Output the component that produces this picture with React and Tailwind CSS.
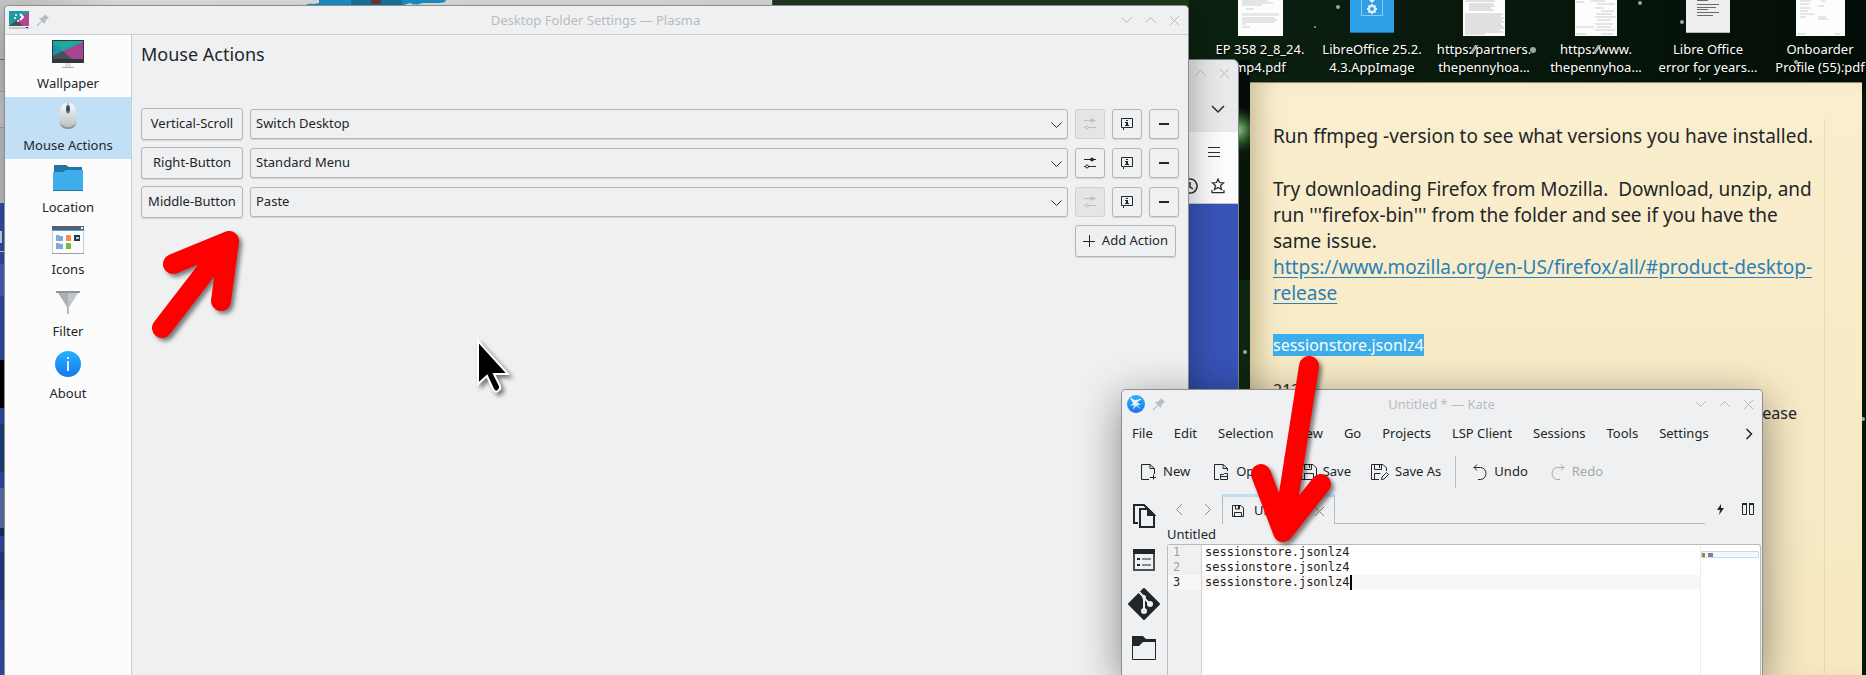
import { useState } from 'react'

const desktopIcons = [
  { name: ['EP 358 2_8_24.', 'mp4.pdf'], kind: 'letter', width: 45 },
  { name: ['LibreOffice 25.2.', '4.3.AppImage'], kind: 'appimage', width: 44 },
  { name: ['https:⁄⁄partners.', 'thepennyhoa...'], kind: 'dense', width: 42 },
  { name: ['https:⁄⁄www.', 'thepennyhoa...'], kind: 'sparse', width: 42 },
  { name: ['Libre Office', 'error for years...'], kind: 'text', width: 44 },
  { name: ['Onboarder', 'Profile (55).pdf'], kind: 'form', width: 49 },
]

const pages = [
  { name: 'Wallpaper', Icon: WallpaperIcon },
  { name: 'Mouse Actions', Icon: MouseIcon },
  { name: 'Location', Icon: LocationIcon },
  { name: 'Icons', Icon: IconsIcon },
  { name: 'Filter', Icon: FilterIcon },
  { name: 'About', Icon: AboutIcon },
]

const mouseActions = [
  { trigger: 'Vertical-Scroll', action: 'Switch Desktop', configurable: false },
  { trigger: 'Right-Button', action: 'Standard Menu', configurable: true },
  { trigger: 'Middle-Button', action: 'Paste', configurable: false },
]

const actionNames = ['Switch Desktop', 'Standard Menu', 'Paste', 'Application Launcher']

const menus = ['File', 'Edit', 'Selection', 'View', 'Go', 'Projects', 'LSP Client', 'Sessions', 'Tools', 'Settings']

const lines = ['sessionstore.jsonlz4', 'sessionstore.jsonlz4', 'sessionstore.jsonlz4']

/* ---------- icons ---------- */

function Stroke({ d, size = 16, width = 1, className = '' }) {
  return (
    <svg width={size} height={size} viewBox={`0 0 ${size} ${size}`} fill="none" stroke="currentColor" strokeWidth={width} className={`shrink-0 ${className}`} aria-hidden="true">
      <path d={d} />
    </svg>
  )
}

function WallpaperIcon() {
  return (
    <svg width="32" height="32" viewBox="0 0 32 32" aria-hidden="true">
      <path d="M0 2h32v23H0z" fill="#31363b" />
      <path d="M1 3h30v18H1z" fill="#1f8fa8" />
      <path d="M1 3h30v1L11 13 1 6z" fill="#1cb09a" opacity=".8" />
      <path d="M31 4v17H20l-9-8z" fill="#a8458f" />
      <path d="m11 13 9 8h-8z" fill="#cf4a64" />
      <path d="m1 18 10-5 9 8H1z" fill="#475057" />
      <path d="M13 25h6v4h-6z" fill="#dfe3e5" />
      <path d="M10 29h12v1H10z" fill="#aab0b5" />
    </svg>
  )
}

function MouseIcon() {
  return (
    <svg width="32" height="32" viewBox="0 0 32 32" aria-hidden="true">
      <defs>
        <linearGradient id="mouse-body" x1="0" y1="0" x2="0" y2="1">
          <stop offset="0" stopColor="#f7f7f7" />
          <stop offset="1" stopColor="#b9bcbf" />
        </linearGradient>
      </defs>
      <path d="M8 12q0-9 8-9t8 9v9q0 8-8 8t-8-8z" fill="url(#mouse-body)" />
      <path d="M8 20v1q0 8 8 8t8-8v-1q0 7-8 7t-8-7z" fill="#8f9499" />
      <path d="M15.500 3h1v11h-1z" fill="#8f9499" />
      <rect x="14" y="5" width="4" height="8" rx="2" fill="#4b6f8c" />
      <rect x="15" y="7" width="2" height="4" rx="1" fill="#2b3c4a" />
    </svg>
  )
}

function LocationIcon() {
  return (
    <svg width="32" height="32" viewBox="0 0 32 32" aria-hidden="true">
      <path d="M2 3h12l3 2h13v8H2z" fill="#2674a0" />
      <path d="M1 10h10l3-2h17v21H1z" fill="#3daee9" />
      <path d="M1 28h30v1H1z" fill="#2674a0" />
    </svg>
  )
}

function IconsIcon() {
  return (
    <svg width="32" height="32" viewBox="0 0 32 32" aria-hidden="true">
      <path d="M0 2h32v28H0z" fill="#c8cccf" />
      <path d="M1 7h30v22H1z" fill="#fcfcfc" />
      <path d="M0 2h32v4H0z" fill="#54616c" />
      <path d="M0 6h32v1H0z" fill="#3daee9" />
      <path d="M29 3h2v2h-2z" fill="#fcfcfc" />
      <path d="M4 11h3l1 1h3v5H4zM4 19h3l1 1h3v5H4z" fill="#7fa9dc" />
      <path d="M14 11h4l1 1v5h-5z" fill="#f88c4c" />
      <path d="M14 19h4l1 1v5h-5z" fill="#6cc13a" />
      <path d="M22 11h6v6h-6z" fill="#31363b" />
      <path d="M24 13h3v2h-3z" fill="#9ad4f2" />
      <path d="M0 29h32v1H0z" fill="#9aa0a5" />
    </svg>
  )
}

function FilterIcon() {
  return (
    <svg width="32" height="32" viewBox="0 0 32 32" aria-hidden="true">
      <path d="M5 5h22L17 21v7h-2v-7z" fill="#a9afb2" />
      <path d="M4 5h24v2H4z" fill="#8f9699" />
      <path d="M16 7h10L17 20v8h-1z" fill="#c0c5c8" />
    </svg>
  )
}

function AboutIcon() {
  return (
    <svg width="32" height="32" viewBox="0 0 32 32" aria-hidden="true">
      <defs>
        <linearGradient id="about-disc" x1="0" y1="0" x2="0" y2="1">
          <stop offset="0" stopColor="#22b4fb" />
          <stop offset="1" stopColor="#1b76f1" />
        </linearGradient>
      </defs>
      <circle cx="16" cy="16" r="13" fill="url(#about-disc)" />
      <path d="M15 9h2v2h-2zM15 13h2v10h-2z" fill="#fff" opacity=".85" />
    </svg>
  )
}

function PlasmaLogo() {
  return (
    <svg width="20" height="18" viewBox="0 0 20 18" aria-hidden="true">
      <path d="M0 0h20v15H0z" fill="#1f9aa0" />
      <path d="M20 1v14h-7L8 9z" fill="#b4458f" />
      <path d="M0 15 8 9l6 6z" fill="#475057" />
      <path d="M0 16h20v2H0z" fill="#c5c9cc" />
      <path d="M17 16h2v1h-2z" fill="#31363b" />
      <path d="m11 3 3 3-3 3" fill="none" stroke="#fff" strokeWidth="2" />
      <circle cx="7" cy="4" r="1" fill="#fff" />
      <circle cx="6" cy="7" r="1" fill="#fff" />
      <circle cx="9" cy="10" r="1" fill="#fff" />
    </svg>
  )
}

function KateLogo() {
  return (
    <svg width="18" height="18" viewBox="0 0 18 18" aria-hidden="true">
      <defs>
        <linearGradient id="kate-disc" x1="0" y1="0" x2="0" y2="1">
          <stop offset="0" stopColor="#29b6f6" />
          <stop offset="1" stopColor="#1b6ff0" />
        </linearGradient>
      </defs>
      <circle cx="9" cy="9" r="9" fill="url(#kate-disc)" />
      <path d="M3 3l5 2 6-1-4 3 4 3-4 0 4 4-5-3-3 4 1-5-4 1 3-3z" fill="#dceefc" />
      <path d="M4 3l4 6M9 7l5-3" stroke="#fff" strokeWidth="1" />
    </svg>
  )
}

function Pin() {
  return (
    <svg width="12" height="12" viewBox="0 0 12 12" fill="#b8bcbf" aria-hidden="true">
      <path d="M8 0l4 4-2 1-2 3v2L5 7.500 1 12H0v-1l4.500-4L2 4h2l3-2z" />
    </svg>
  )
}

function GitIcon() {
  return (
    <svg width="32" height="32" viewBox="0 0 32 32" aria-hidden="true">
      <path d="M16 1 31 16 16 31 1 16z" fill="#232629" stroke="#232629" strokeWidth="2" strokeLinejoin="round" />
      <path d="M11 4l5 5v14M16 10l6 6" stroke="#eff0f1" strokeWidth="2" fill="none" />
      <circle cx="16" cy="9" r="2" fill="#eff0f1" />
      <circle cx="16" cy="23" r="3" fill="#eff0f1" />
      <circle cx="22" cy="16" r="3" fill="#eff0f1" />
    </svg>
  )
}

function SlidersIcon() {
  return (
    <svg width="16" height="16" viewBox="0 0 16 16" stroke="currentColor" fill="none" aria-hidden="true">
      <path d="M2 4.500h12M6 11.500h8M2 11.500h1" />
      <circle cx="10" cy="4.500" r="1.500" fill="currentColor" />
      <circle cx="5" cy="11.500" r="1.500" />
    </svg>
  )
}

function HintIcon() {
  return (
    <svg width="16" height="16" viewBox="0 0 16 16" aria-hidden="true">
      <path d="M4.500 14v-2.500h-2v-9h11v9H5" fill="none" stroke="currentColor" />
      <path d="M7 4h2v1H7zM6 6h3v3h1v1H6V9h1V7H6z" fill="currentColor" />
    </svg>
  )
}

function FloppyIcon() {
  return (
    <svg width="16" height="16" viewBox="0 0 16 16" fill="none" stroke="currentColor" aria-hidden="true">
      <path d="M.5 .5H12L15.500 4v11.500H.5zM3.500 .5v5h7v-5M8.500 1v3M3.500 15.500v-6h9v6" />
    </svg>
  )
}

function SaveAsIcon() {
  return (
    <svg width="18" height="16" viewBox="0 0 18 16" fill="none" stroke="currentColor" aria-hidden="true">
      <path d="M8 15.500H.5V.5H12L15.500 4v3M3.500 .5v5h7v-5M8.500 1v3M3.500 15.500v-6h6" />
      <path d="m10.500 15.500.5-2.500 4.500-4.500 2 2L13 15z" />
    </svg>
  )
}

function TabFloppyIcon() {
  return (
    <svg width="12" height="12" viewBox="0 0 12 12" fill="none" stroke="currentColor" aria-hidden="true">
      <path d="M.5 .5H9L11.500 3v8.500H.5zM2.500 11.500v-4h7v4M3.500 1v3h4V1" />
      <path d="M6 1h2v3H6z" fill="currentColor" stroke="none" />
    </svg>
  )
}

const chevronDown = 'M3.500 5.500 8.500 10.500 13.500 5.500'
const chevronUp = 'M3.500 10.500 8.500 5.500 13.500 10.500'
const cross = 'M4 4 13 13M13 4 4 13'

/* ---------- shared pieces ---------- */

function TitleBar({ title, logo, pad }) {
  return (
    <header className={`flex items-center bg-[#eff0f1] text-[#b8bcbf] ${pad}`}>
      <div className="flex w-24 items-center gap-2">
        {logo}
        <Pin />
      </div>
      <h2 className="flex-1 text-center text-[13px] leading-4">{title}</h2>
      <div className="flex w-24 justify-end gap-2">
        <button aria-label="Minimize"><Stroke d={chevronDown} /></button>
        <button aria-label="Maximize"><Stroke d={chevronUp} /></button>
        <button aria-label="Close"><Stroke d={cross} /></button>
      </div>
    </header>
  )
}

const box = 'rounded-[3px] border border-[#b3b5b6] bg-[#eff0f1] shadow-[0_1px_1px_rgba(0,0,0,0.12)]'

function ToolButton({ label, disabled, children }) {
  return (
    <button
      aria-label={label}
      disabled={disabled}
      className={`flex size-[30px] shrink-0 items-center justify-center ${box} disabled:border-[#d0d1d2] disabled:bg-[#e4e5e6] disabled:text-[#bdbfc0] disabled:shadow-none`}
    >
      {children}
    </button>
  )
}

/* ---------- desktop ---------- */

function Thumbnail({ kind, width }) {
  if (kind === 'appimage') {
    return (
      <svg width={width} height="33" viewBox="0 0 44 33" aria-hidden="true">
        <path d="M0 0h44v33H0z" fill="#2f9fe8" />
        <path d="M0 32h44v1H0z" fill="#1a6fa8" />
        <path d="M11.500 0v15.500h21V0" fill="none" stroke="#8cc9f3" />
        <path d="m19 0 3 3 3-3z" fill="#e3f2fc" />
        <circle cx="22" cy="9" r="3" fill="none" stroke="#e3f2fc" strokeWidth="2" />
        <path d="M22 4v2M22 12v2M17 9h2M25 9h2M18.500 5.500l1 1M24.500 11.500l1 1M25.500 5.500l-1 1M19.500 11.500l-1 1" stroke="#e3f2fc" strokeWidth="2" />
      </svg>
    )
  }
  if (kind === 'text') {
    return (
      <svg width={width} height="33" viewBox="0 0 44 33" aria-hidden="true">
        <path d="M0 0h44v33H0z" fill="#eeeeee" />
        <path d="M0 32h44v1H0z" fill="#b5b5b5" />
        <path d="M11 .5h11M11 4.500h22M11 7.500h19M11 9.500h11M11 12.500h22M11 15.500h16" stroke="#6a6a6a" />
      </svg>
    )
  }
  const marks = {
    letter: 'M4 1h26M4 3h31M4 5h20M8 9h8M4 18h33M4 20h35M4 22h32M4 24h4M4 27h8',
    dense: 'M2 1h30M6 4h24M6 6h26M6 8h22M6 10h25M2 14h38M2 16h36M2 18h39M2 20h37M2 22h39M2 24h36M2 26h38M2 28h39M2 30h35M2 32h38M2 34h20',
    sparse: 'M1 2h8M16 1h14M22 4h18M20 8h9M26 11h13M21 14h16M20 17h21M22 20h14M20 24h18M1 27h18M22 27h14M20 30h20M1 34h10M26 34h12',
    form: 'M4 1h11M25 1h4M4 4h9M22 6h6M4 8h10M4 11h8M4 14h14M22 17h8M4 17h6M22 19h10M1 34h9M39 34h5',
  }
  return (
    <svg width={width} height="36" viewBox={`0 0 ${width} 36`} aria-hidden="true">
      <path d={`M0 0h${width}v36H0z`} fill="#fdfdfd" />
      {kind === 'letter' && <path d="M4 13h37v3H4z" fill="#e3eaf0" />}
      <path d={marks[kind]} stroke={kind === 'dense' ? '#c4c4c4' : '#cdcdcd'} />
    </svg>
  )
}

function DesktopIcons() {
  return (
    <ul className="absolute -right-2.5 top-0 flex">
      {desktopIcons.map((icon) => (
        <li key={icon.kind} className="flex w-28 flex-col items-center">
          <div className="flex h-10 items-start">
            <Thumbnail kind={icon.kind} width={icon.width} />
          </div>
          <p className="text-center text-[13px] leading-[18px] whitespace-nowrap text-white [text-shadow:1px_1px_2px_#000]">
            {icon.name[0]}
            <br />
            {icon.name[1]}
          </p>
        </li>
      ))}
    </ul>
  )
}

function Wallpaper() {
  const stars = [
    [1338, 7, 2], [1640, 3, 2], [1682, 22, 2], [1533, 50, 3], [1796, 62, 2], [1843, 65, 1],
    [1245, 352, 2], [1315, 27, 1], [1700, 79, 1], [1863, 419, 2],
  ]
  return (
    <svg className="absolute inset-0 size-full" aria-hidden="true">
      <defs>
        <radialGradient id="nebula">
          <stop offset="0" stopColor="#9cc892" />
          <stop offset=".4" stopColor="#3f7a3c" stopOpacity=".8" />
          <stop offset="1" stopColor="#0e2412" stopOpacity="0" />
        </radialGradient>
        <linearGradient id="sky">
          <stop offset="0" stopColor="#0c2110" />
          <stop offset=".6" stopColor="#07150b" />
          <stop offset="1" stopColor="#030d07" />
        </linearGradient>
      </defs>
      <rect width="100%" height="100%" fill="#07150b" />
      <rect x="1189" width="700" height="90" fill="url(#sky)" />
      <rect x="773" width="416" height="60" fill="#1f3a1e" />
      <rect x="1236" y="60" width="14" height="80" fill="#040a05" />
      <rect x="1236" y="280" width="14" height="110" fill="#0d2713" />
      <circle cx="1238" cy="130" r="26" fill="url(#nebula)" />
      {stars.map(([x, y, r]) => (
        <circle key={x} cx={x} cy={y} r={r} fill="#b9cfbb" opacity=".8" />
      ))}
    </svg>
  )
}

function StickyNote() {
  return (
    <article className="absolute top-[82px] right-1 bottom-0 w-[612px] border-t border-[#8a8468] bg-[#f8edcd] bg-linear-to-b from-[#f9eece] to-[#f7e8c0] shadow-[inset_24px_0_24px_-16px_rgba(90,70,20,0.3)]">
      <div className="mt-9 mr-[37px] h-full border-r border-[#e6dab6] pr-1.5 pl-[23px] text-[19px] leading-[26px] whitespace-pre-wrap text-[#232629]">
        <p className="pt-1">Run ffmpeg -version to see what versions you have installed.</p>
        <p className="mt-[27px]">{'Try downloading Firefox from Mozilla.  Download, unzip, and run \'\'\'firefox-bin\'\'\' from the folder and see if you have the same issue.'}</p>
        <a href="#product-desktop-release" className="block text-[#2980b9] underline underline-offset-3">
          https://www.mozilla.org/en-US/firefox/all/#product-desktop-release
        </a>
        <p className="mt-7 text-[16px] leading-[23px]">
          <span className="bg-[#3daee9] text-[#fcfcfc]">sessionstore.jsonlz4</span>
        </p>
        <p className="mt-[22px] text-[16px] leading-[23px]">213</p>
        <p className="pr-[21px] text-right text-[16px] leading-[23px]">latest release</p>
      </div>
    </article>
  )
}

function BrowserWindow() {
  return (
    <section aria-label="Browser" className="absolute top-[59px] right-[627px] bottom-0 left-0 flex flex-col overflow-hidden rounded-t-md border border-[#808284] bg-[#3854b8]">
      <div className="flex h-[72px] flex-col items-end gap-5 bg-[#e9eaec] px-1.5 pt-[5px]">
        <div className="flex gap-2 text-[#b8bcbf]">
          <button aria-label="Maximize"><Stroke d={chevronUp} /></button>
          <button aria-label="Close"><Stroke d={cross} /></button>
        </div>
        <button aria-label="List all tabs" className="mr-1.5 text-[#2b2d30]">
          <Stroke d="M2 5l6 6 6-6" width={1.5} />
        </button>
      </div>
      <div className="flex h-[72px] flex-col items-end gap-[18px] border-b border-[#c8c8c8] bg-[#fdfdfd] px-3 pt-3 text-[#2b2d30]">
        <button aria-label="Menu" className="mr-1">
          <Stroke d="M2 3.500h12M2 8.500h12M2 12.500h12" />
        </button>
        <div className="flex gap-3">
          <button aria-label="History">
            <Stroke d="M8 1a7 7 0 1 0 .1 0M8 4v5l3 2" width={1.5} />
          </button>
          <button aria-label="Bookmarks">
            <Stroke d="M8 1l1.500 3.500 4 .5-3 2.500 1 4L8 9.500 4.500 11.500l1-4-3-2.500 4-.5zM2 12v2.500h12V12" width={1.25} />
          </button>
        </div>
      </div>
    </section>
  )
}

// slivers of the windows that show above and to the left of the settings dialog
function WindowSlivers() {
  return (
    <>
      <div className="absolute top-0 left-0 h-[59px] w-[773px] border-r border-[#555] bg-linear-to-r from-[#c9c9c9] via-[#ececec] via-15% to-[#e2e2e2]">
        <svg width="150" height="6" viewBox="0 0 150 6" className="ml-[306px]" aria-hidden="true">
          <path d="M0 6q0-3 8-2l5-1V0h127q0 3-8 3h-16q-6 3-12 0l-6 2H96z" fill="#1e96d0" />
          <path d="M45 0h51v6H45z" fill="#1a7aa8" />
          <path d="M65 0h10v4h-10z" fill="#6e3b3b" />
        </svg>
      </div>
      <div className="absolute top-[59px] bottom-0 left-0 flex w-2 flex-col bg-[#3450ae]">
        <div className="h-8 border-t border-[#777] bg-[#c5c7c8]" />
        <div className="h-[37px] border-y border-[#aaa] bg-[#d0d1d2]" />
        <div className="h-[75px] bg-[#c8c9c9]" />
        <div className="mt-7 h-3 w-[2px] bg-[#d9dff0]" />
        <div className="mt-2 h-px bg-[#d9dff0]" />
        <div className="mt-3 h-8 bg-[#4a65c0]" />
        <div className="mt-16 h-12 bg-black" />
        <div className="mt-4 h-12 bg-[#1d4583]" />
        <div className="mt-4 h-10 bg-[#6376b8]" />
        <div className="h-2 bg-[#223068]" />
        <div className="mt-4 h-12 bg-[#2a3f8c]" />
      </div>
    </>
  )
}

/* ---------- settings dialog ---------- */

function SettingsWindow() {
  const [page, setPage] = useState('Mouse Actions')
  return (
    <section aria-label="Desktop Folder Settings" className="absolute top-[5px] right-[677px] bottom-0 left-1 flex flex-col overflow-hidden rounded-t-[5px] border border-b-0 border-[#8b8d8f] bg-[#eff0f1] shadow-[0_8px_36px_rgba(0,0,0,0.35)]">
      <TitleBar title="Desktop Folder Settings — Plasma" logo={<PlasmaLogo />} pad="h-[29px] border-b border-[#cbcdce] pl-1 pr-1.5" />
      <div className="flex flex-1">
        <nav className="w-[127px] border-r border-[#cbcdce] bg-[#fcfcfc]">
          {pages.map(({ name, Icon }) => (
            <button
              key={name}
              onClick={() => setPage(name)}
              className={`flex h-[62px] w-full flex-col items-center gap-1 pt-[3px] text-[13px] leading-[18px] ${name === page ? 'bg-[#c2e0f5]' : ''}`}
            >
              <Icon />
              {name}
            </button>
          ))}
        </nav>
        <main className="flex-1 pt-[7px] pr-[9px] pl-[9px]">
          <h1 className="text-[18px] leading-6">Mouse Actions</h1>
          <div className="mt-[42px] flex flex-col gap-[7px] text-[13px]">
            {mouseActions.map(({ trigger, action, configurable }) => (
              <div key={trigger} className="flex items-center gap-[7px]">
                <button className={`h-8 w-[102px] shrink-0 ${box}`}>{trigger}</button>
                <div className="relative flex-1">
                  <select
                    aria-label={`${trigger} action`}
                    defaultValue={action}
                    className={`block h-[30px] w-full appearance-none px-[5px] ${box}`}
                  >
                    {actionNames.map((name) => (
                      <option key={name}>{name}</option>
                    ))}
                  </select>
                  <Stroke d={chevronDown} className="pointer-events-none absolute top-2 right-1" />
                </div>
                <ToolButton label="Configure" disabled={!configurable}><SlidersIcon /></ToolButton>
                <ToolButton label="About this action"><HintIcon /></ToolButton>
                <ToolButton label="Remove"><Stroke d="M3 8h10" width={2} /></ToolButton>
              </div>
            ))}
            <button className={`mr-[3px] flex h-8 w-[101px] items-center justify-between self-end px-[7px] ${box}`}>
              <Stroke d="M0 6.500h12M6.500 0v12" size={12} />
              Add Action
            </button>
          </div>
        </main>
      </div>
    </section>
  )
}

/* ---------- kate ---------- */

function ToolbarItem({ icon, label, className = '' }) {
  return (
    <button className={`flex items-center gap-1.5 disabled:text-[#a5a8aa] ${className}`} disabled={label === 'Redo'}>
      {icon}
      {label}
    </button>
  )
}

function KateWindow() {
  return (
    <section aria-label="Kate" className="absolute top-[389px] right-[103px] bottom-0 flex w-[642px] flex-col overflow-hidden rounded-t-[5px] border border-b-0 border-[#8b8d8f] bg-[#eff0f1] text-[13px] shadow-[0_10px_44px_rgba(0,0,0,0.45)]">
      <TitleBar title="Untitled * — Kate" logo={<KateLogo />} pad="h-7 shrink-0 pl-[5px] pr-1.5" />
      <div className="flex h-8 shrink-0 items-center justify-between pr-[5px] pl-2.5">
        <nav className="flex gap-[21px] whitespace-nowrap">
          {menus.map((name) => (
            <button key={name}>{name}</button>
          ))}
        </nav>
        <button aria-label="More menus"><Stroke d="M5.500 3l5 5-5 5" width={1.5} /></button>
      </div>

      <div role="toolbar" className="flex h-11 shrink-0 items-center pl-[19px]">
        <ToolbarItem
          label="New"
          icon={<Stroke d="M8 15.500H.5V.5H9l4.500 4V10M9 .5v4h4.500M9 13.500h6M12.500 10.500v5" />}
        />
        <ToolbarItem
          label="Open"
          className="ml-6"
          icon={<Stroke d="M5 15.500H.5V.5H9l4.500 4V7M9 .5v4h4.500M6.500 15.500v-5h3l1-1h3v6zM6.500 12.500h7" />}
        />
        <div className="ml-[14px] h-8 w-px bg-[#b8babb]" />
        <ToolbarItem label="Save" className="ml-4" icon={<FloppyIcon />} />
        <ToolbarItem label="Save As" className="ml-5" icon={<SaveAsIcon />} />
        <div className="ml-[14px] h-8 w-px bg-[#b8babb]" />
        <ToolbarItem label="Undo" className="ml-4" icon={<Stroke d="M2 3.500h6.500a5.500 6 0 0 1 0 12H6M5 .5 2 3.500l3 3" />} />
        <ToolbarItem label="Redo" className="ml-[22px]" icon={<Stroke d="M14 3.500H7.500a5.500 6 0 0 0 0 12H10M11 .5l3 3-3 3" />} />
      </div>

      <div className="flex flex-1">
        <aside className="flex w-[45px] flex-col items-center pr-px text-[#232629]">
          <button aria-label="Documents" className="flex h-11 items-center">
            <svg width="24" height="26" viewBox="0 0 24 26" fill="none" stroke="currentColor" strokeWidth="2" aria-hidden="true">
              <path d="M6 20H2V2h10l3 3" />
              <path d="M8 6h8l6 6v12H8zM16 6v6h6" />
              <path d="M16 6l6 6h-6z" fill="currentColor" />
            </svg>
          </button>
          <button aria-label="Outline" className="flex h-11 items-center">
            <svg width="22" height="22" viewBox="0 0 22 22" fill="none" stroke="#4d5053" strokeWidth="1" aria-hidden="true">
              <path d="M1 1h20v20H1z" strokeWidth="2" />
              <path d="M0 0h22v5H0z" fill="#232629" stroke="none" />
              <path d="M9 10h9M9 16h9" strokeWidth="1" stroke="#232629" />
              <path d="M4 9h3v2H4zM4 15h3v2H4z" fill="#232629" stroke="none" />
            </svg>
          </button>
          <button aria-label="Git" className="flex h-11 items-center"><GitIcon /></button>
          <button aria-label="Projects" className="flex h-11 items-center">
            <svg width="24" height="24" viewBox="0 0 24 24" aria-hidden="true">
              <path d="M.5 3v20.500h23V4" fill="none" stroke="#232629" />
              <path d="M0 0h11l3 3h10v3H11l-4 4H0z" fill="#232629" />
            </svg>
          </button>
        </aside>

        <div className="flex flex-1 flex-col">
          <div className="flex h-[30px] items-stretch">
            <div className="flex w-[55px] items-center gap-3 pl-1 text-[#8a8d90]">
              <button aria-label="Previous tab"><Stroke d="M11 3 5.500 8.500 11 14" /></button>
              <button aria-label="Next tab"><Stroke d="M6 3l5.500 5.500L6 14" /></button>
            </div>
            <div className="flex w-[113px] items-center border-x border-t-3 border-x-[#b8babb] border-t-[#bfdef3] px-[9px]">
              <TabFloppyIcon />
              <span className="ml-2.5 flex-1">Untitled</span>
              <button aria-label="Close tab" className="-mr-0.5 text-[#8a8d90]"><Stroke d={cross} /></button>
            </div>
            <div className="flex-1 border-b border-[#b8babb]" />
            <div className="flex items-center gap-[17px] pr-2 pl-2.5">
              <button aria-label="Quick open">
                <svg width="10" height="12" viewBox="0 0 10 12" aria-hidden="true">
                  <path d="M6 1 2 7h3l-1 5 5-7H6z" fill="#232629" />
                </svg>
              </button>
              <button aria-label="Split view">
                <svg width="12" height="12" viewBox="0 0 12 12" fill="none" stroke="#232629" aria-hidden="true">
                  <path d="M.5 .5h4v11h-4zM7.500 .5h4v11h-4z" />
                  <path d="M0 1h5M7 1h5" strokeWidth="2" />
                </svg>
              </button>
            </div>
          </div>
          <p className="h-5 leading-5">Untitled</p>
          <div className="mr-px flex flex-1 rounded-t-[3px] border border-b-0 border-[#b8babb] bg-white">
            <div className="flex flex-1 flex-col bg-linear-to-r from-[#f0f0f0] from-[33px] to-white to-[33px] font-[DejaVu_Sans_Mono,monospace] text-[12px] leading-[15px]">
              {lines.map((line, i) => {
                const current = i === lines.length - 1
                return (
                  <div key={i} className={`flex ${current ? 'bg-[#f8f7f6]' : ''}`}>
                    <span className={`w-[34px] border-r border-[#cfd0d1] pl-[5px] ${current ? 'text-[#232629]' : 'text-[#a0a0a0]'}`}>{i + 1}</span>
                    <code className={`pl-[3px] font-[DejaVu_Sans_Mono,monospace] text-[#1f1c1b] ${current ? 'border-r-2 border-black' : ''}`}>{line}</code>
                  </div>
                )
              })}
              <div className="w-[34px] flex-1 border-r border-[#cfd0d1]" />
            </div>
            <div className="w-[60px] border-l border-[#ececec] pt-1.5 pr-px">
              <div className="flex h-[7px] items-center gap-[3px] rounded-[1px] border border-[#bfe0f3] bg-[#f4f8fc]">
                <span className="h-1 w-[3px] bg-[#b08020]" />
                <span className="h-1 w-[5px] bg-[#7f858a]" />
              </div>
            </div>
          </div>
        </div>
      </div>
    </section>
  )
}

/* ---------- annotations ---------- */

function RedArrow({ className, width, height, d }) {
  return (
    <svg width={width} height={height} viewBox={`0 0 ${width} ${height}`} className={`pointer-events-none absolute drop-shadow-[3px_3px_2px_rgba(0,0,0,0.5)] ${className}`} aria-hidden="true">
      <path d={d} fill="none" stroke="#fe0000" strokeWidth="20" strokeLinecap="round" strokeLinejoin="round" />
    </svg>
  )
}

function Pointer() {
  return (
    <svg width="38" height="58" viewBox="0 0 38 58" className="pointer-events-none absolute top-[336px] left-[475px] drop-shadow-[3px_3px_2px_rgba(0,0,0,0.5)]" aria-hidden="true">
      <path d="M3 5v43l9-8 6 13q2 4 5 2t2-5l-6-12h14z" fill="#000" stroke="#fff" strokeWidth="2" />
    </svg>
  )
}

export default function App() {
  return (
    <div className="relative h-screen w-full overflow-hidden font-['Noto_Sans',sans-serif] text-[#232629]">
      <Wallpaper />
      <DesktopIcons />
      <StickyNote />
      <BrowserWindow />
      <WindowSlivers />
      <SettingsWindow />
      <KateWindow />
      <RedArrow className="top-[225px] left-[145px]" width={100} height={120} d="M17 103 84 16M28 39 84 16 76 76" />
      <RedArrow className="top-[350px] right-[527px]" width={90} height={200} d="M60 16 34 182M12 124 34 182 72 134" />
      <Pointer />
    </div>
  )
}
